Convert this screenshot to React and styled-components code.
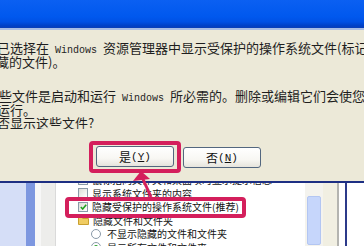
import React from "react";
import styled, { createGlobalStyle } from "styled-components";

const Global = createGlobalStyle`
  html, body { margin: 0; padding: 0; background: #ffffff; }
  body { width: 364px; height: 246px; overflow: hidden; }
  #root { width: 364px; height: 246px; }
`;

const ACCENT = "#d41f5c";
const CJK = `"Noto Sans CJK SC", "Noto Sans", sans-serif`;

const Page = styled.div`
  position: relative;
  width: 364px;
  height: 246px;
  overflow: hidden;
  font-family: ${CJK};
`;

const Dialog = styled.div`
  height: 181px;
  background: #ece9d8;
  display: flex;
  flex-direction: column;
`;

const TitleBar = styled.div`
  height: 28px;
  flex: none;
  background: linear-gradient(#0b60f2 0%, #0058ee 60%, #0050e4 78%, #0040c6 92%, #0a3fb8 100%);
  border-bottom: 2px solid #a9bde4;
`;

const Message = styled.div`
  padding-top: 10px;
  color: #1e1e1e;
  font-size: 13px;
  overflow: hidden;
  white-space: nowrap;
`;

const Line = styled.div`
  height: ${(p) => p.$h}px;
  line-height: ${(p) => p.$h}px;
  margin-left: ${(p) => p.$x}px;
  margin-top: ${(p) => p.$top || 0}px;
`;

const Latin = styled.span`
  font-family: "Liberation Mono", monospace;
  font-size: 10px;
  white-space: pre;
`;

const ButtonRow = styled.div`
  display: flex;
  align-items: flex-start;
  gap: 2px;
  margin-top: 12px;
  padding-left: 89px;
`;

const Highlight = styled.div`
  border: 4px solid ${ACCENT};
  border-radius: 4px;
  padding: 1px 3px 2px;
`;

const Button = styled.div`
  width: 76px;
  height: 19px;
  margin-top: ${(p) => p.$shift || 0}px;
  border: 1px solid #53677f;
  border-radius: 3px;
  background: linear-gradient(#ffffff 0%, #f8f7f3 60%, #e6e4dc 100%);
  display: flex;
  align-items: center;
  justify-content: center;
  font-size: 12px;
  color: #111;
`;

const Key = styled.span`
  font-family: "Liberation Mono", monospace;
  font-size: 11px;
  u { text-decoration: underline; }
`;

const Explorer = styled.div`
  height: 63px;
  border-top: 2px solid #1d2f83;
  display: flex;
  background: #ffffff;
`;

const Strip = styled.div`
  flex: none;
  width: ${(p) => p.$w}px;
  background: ${(p) => p.$bg};
  border-right: ${(p) => (p.$edge ? `1px solid ${p.$edge}` : "none")};
`;

const ListArea = styled.div`
  position: relative;
  flex: none;
  width: 249px;
  overflow: hidden;
`;

const List = styled.div`
  margin-top: -10px;
  display: flex;
  flex-direction: column;
`;

const Row = styled.div`
  height: 13.5px;
  flex: none;
  display: flex;
  align-items: center;
  gap: ${(p) => (p.$radio ? 6 : 4)}px;
  padding-left: ${(p) => (p.$radio ? 35 : 22)}px;
  font-size: 10px;
  color: #141414;
  white-space: nowrap;
`;

const Check = styled.div`
  flex: none;
  width: 8px;
  height: 8px;
  border: 1px solid #8a9aa8;
  background: linear-gradient(135deg, #dcdcd6, #ffffff);
  display: flex;
  align-items: center;
  justify-content: center;
`;

const Radio = styled.div`
  flex: none;
  width: 8px;
  height: 8px;
  border: 1px solid #8a9aa8;
  border-radius: 50%;
  background: #ffffff;
  display: flex;
  align-items: center;
  justify-content: center;
  &::after {
    content: "";
    display: ${(p) => (p.$on ? "block" : "none")};
    width: 4px;
    height: 4px;
    border-radius: 50%;
    background: #2fa52f;
  }
`;

const RowBox = styled.div`
  position: absolute;
  left: 9px;
  top: 14px;
  width: 173px;
  height: 13px;
  border: 4px solid ${ACCENT};
  border-radius: 4px;
`;

const Scroll = styled.div`
  flex: none;
  width: 18px;
  background: #f4f3ee;
  display: flex;
  justify-content: center;
  padding-top: 13px;
  box-sizing: border-box;
`;

const Thumb = styled.div`
  width: 12px;
  height: 47px;
  border: 1px solid #b3c6f2;
  border-radius: 2px;
  background: #c6d6fb;
`;

const Arrow = styled.svg`
  position: absolute;
  left: 0;
  top: 0;
  pointer-events: none;
`;

const Folder = () => (
  <svg width="11" height="9" viewBox="0 0 11 9" style={{ flex: "none" }}>
    <path d="M0.5 1.5 h3 l1 1 h6 v6 h-10 z" fill="#f0cc62" stroke="#c9a030" />
  </svg>
);

export default function App() {
  return (
    <>
      <Global />
      <Page>
        <Dialog>
          <TitleBar />
          <Message>
            <Line $h={15} $x={-3}>
              已选择在<Latin> Windows </Latin>资源管理器中显示受保护的操作系统文件(标记为
            </Line>
            <Line $h={14} $x={-4}>藏的文件)。</Line>
            <Line $h={15} $x={-1} $top={19}>
              些文件是启动和运行<Latin> Windows </Latin>所必需的。删除或编辑它们会使您的
            </Line>
            <Line $h={13} $x={-3}>运行。</Line>
            <Line $h={13} $x={-3}>否显示这些文件?</Line>
          </Message>
          <ButtonRow>
            <Highlight>
              <Button>
                是<Key>(<u>Y</u>)</Key>
              </Button>
            </Highlight>
            <Button $shift={6}>
              否<Key>(<u>N</u>)</Key>
            </Button>
          </ButtonRow>
        </Dialog>
        <Explorer>
          <Strip $w={26} $bg="#d5def7" />
          <Strip $w={9} $bg="#7d97e0" />
          <Strip $w={6} $bg="#f7f7f7" />
          <Strip $w={14} $bg="#ededeb" $edge="#dadada" />
          <ListArea>
            <List>
              <Row>
                <Check />
                鼠标指向文件夹和桌面项时显示提示信息
              </Row>
              <Row>
                <Check />
                显示系统文件夹的内容
              </Row>
              <Row>
                <Check>
                  <svg width="7" height="6" viewBox="0 0 7 6">
                    <path d="M0.8 3 L2.7 5 L6.2 0.8" fill="none" stroke="#21a121" strokeWidth="1.6" />
                  </svg>
                </Check>
                隐藏受保护的操作系统文件(推荐)
              </Row>
              <Row>
                <Folder />
                隐藏文件和文件夹
              </Row>
              <Row $radio>
                <Radio />
                不显示隐藏的文件和文件夹
              </Row>
              <Row $radio>
                <Radio $on />
                显示所有文件和文件夹
              </Row>
            </List>
            <RowBox />
          </ListArea>
          <Scroll>
            <Thumb />
          </Scroll>
          <Strip $w={14} $bg="#f1efe2" />
          <Strip $w={2} $bg="#b4b4b0" />
          <Strip $w={6} $bg="#ffffff" />
          <Strip $w={2} $bg="#2c3a8a" />
        </Explorer>
        <Arrow width="364" height="246" viewBox="0 0 364 246">
          <polygon points="141,171 133,181 150,179" fill={ACCENT} />
          <line x1="142" y1="177" x2="151" y2="197" stroke={ACCENT} strokeWidth="3" />
        </Arrow>
      </Page>
    </>
  );
}
